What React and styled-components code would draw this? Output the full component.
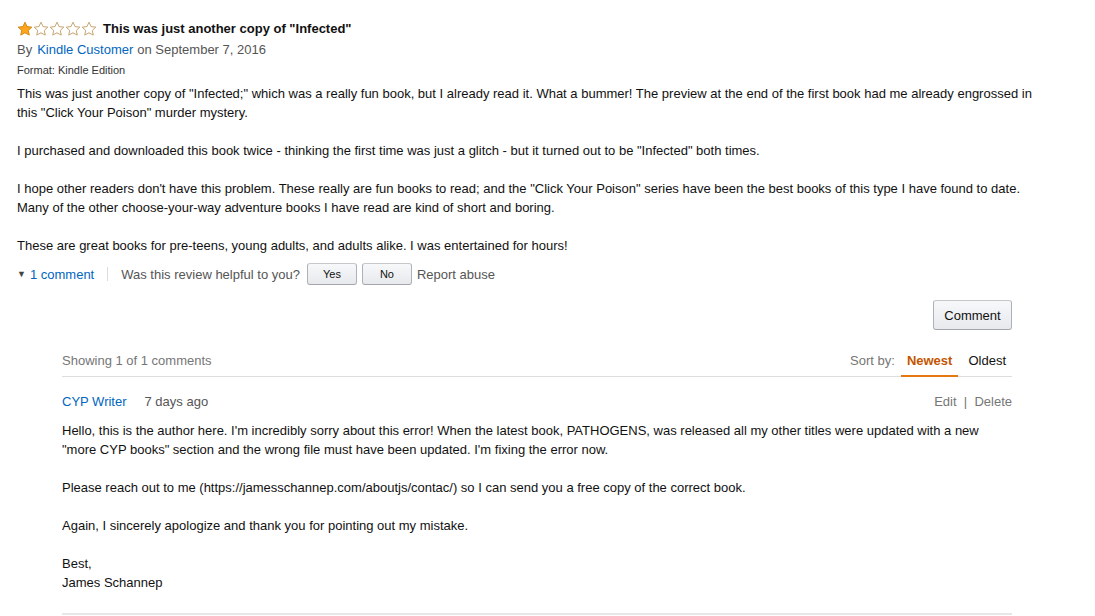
import React from 'react';
import styled, { createGlobalStyle } from 'styled-components';

const Global = createGlobalStyle`
body {
    margin: 0;
    background: #fff;
    font-family: "Liberation Sans", Arial, sans-serif;
    font-size: 13px;
    color: #111;
}
`

const Page = styled.div`
padding: 19px 17px 0 17px;
`

const Review = styled.div`
width: 1020px;
`

const TitleRow = styled.div`
display: flex;
align-items: center;
height: 19px;
gap: 6px;
`

const Stars = styled.div`
display: flex;
`

const Title = styled.span`
font-weight: bold;
line-height: 19px;
`

const ByLine = styled.div`
margin-top: 2px;
line-height: 19px;
color: #555;
`

const Link = styled.a`
color: #0066c0;
text-decoration: none;
margin: ${props => props.$gap || '0'};
`

const Format = styled.div`
margin-top: 3px;
font-size: 11px;
line-height: 16px;
color: #333;
`

const Body = styled.div`
margin-top: 6px;
line-height: 19px;
p {
    margin: 0 0 19px 0;
}
p:last-child {
    margin-bottom: 0;
}
`

const Actions = styled.div`
display: flex;
align-items: center;
margin-top: 8px;
height: 22px;
color: #555;
`

const Caret = styled.span`
font-size: 9px;
color: #444;
margin-right: 4px;
`

const Divider = styled.span`
width: 1px;
height: 14px;
background: #ddd;
margin: 0 13px;
`

const SmallButton = styled.button`
font-family: inherit;
font-size: 11px;
color: #111;
width: 50px;
height: 22px;
margin-left: ${props => props.$left || '5px'};
border: 1px solid #adb1b8;
border-top-color: #c5c7cb;
border-bottom-color: #a2a6ac;
border-radius: 3px;
background: linear-gradient(#f7f8fa, #e7e9ec);
padding: 0;
`

const Muted = styled.span`
margin-left: ${props => props.$left || '0'};
color: ${props => props.$color || '#555'};
`

const Comments = styled.div`
width: 950px;
margin: 15px 0 0 45px;
`

const CommentBar = styled.div`
display: flex;
justify-content: flex-end;
`

const BigButton = styled.button`
font-family: inherit;
font-size: 13px;
color: #111;
width: 79px;
height: 30px;
border: 1px solid #adb1b8;
border-top-color: #c5c7cb;
border-bottom-color: #a2a6ac;
border-radius: 3px;
background: linear-gradient(#f7f8fa, #e7e9ec);
`

const ListHeader = styled.div`
display: flex;
justify-content: space-between;
align-items: flex-end;
margin-top: 21px;
border-bottom: 1px solid #ddd;
`

const Showing = styled.span`
color: #767676;
line-height: 19px;
padding-bottom: 6px;
`

const Sort = styled.div`
display: flex;
align-items: flex-end;
`

const SortLabel = styled.span`
color: #767676;
line-height: 19px;
padding-bottom: 6px;
margin-right: 6px;
`

const Tab = styled.span`
line-height: 19px;
padding: 0 6px 5px 6px;
margin-bottom: -1px;
color: ${props => props.$active ? '#c45500' : '#111'};
font-weight: ${props => props.$active ? 'bold' : 'normal'};
border-bottom: 2px solid ${props => props.$active ? '#e47911' : 'transparent'};
&:last-child {
    padding-right: 6px;
    margin-left: 4px;
}
`

const Comment = styled.div`
padding: 15px 0 21px 0;
border-bottom: 2px solid #e7e7e7;
`

const CommentHead = styled.div`
display: flex;
justify-content: space-between;
line-height: 19px;
`

const Author = styled.div`
display: flex;
gap: 18px;
`

const Tools = styled.div`
color: #767676;
`

const CommentBody = styled.div`
margin-top: 10px;
line-height: 19px;
color: #111;
p {
    margin: 0 0 19px 0;
}
p:last-child {
    margin-bottom: 0;
}
`

const STAR = 'M8 1.2l2.05 4.4 4.75.55-3.5 3.25.95 4.7L8 11.75 3.75 14.1l.95-4.7-3.5-3.25 4.75-.55z';

const Star = ({ filled }) => (
    <svg width="16" height="16" viewBox="0 0 16 16">
        <path
            d={STAR}
            fill={filled ? '#ffa41c' : '#fff'}
            stroke={filled ? '#d28a13' : '#c8a46e'}
            strokeWidth="1"
            strokeLinejoin="round"
        />
    </svg>
);

const App = () => {
    return (
        <>
            <Global />
            <Page>
                <Review>
                    <TitleRow>
                        <Stars>
                            {[0, 1, 2, 3, 4].map(i => <Star key={i} filled={i === 0} />)}
                        </Stars>
                        <Title>This was just another copy of "Infected"</Title>
                    </TitleRow>
                    <ByLine>
                        By<Link href="#" $gap="0 4px 0 5px">Kindle Customer</Link>on September 7, 2016
                    </ByLine>
                    <Format>Format: Kindle Edition</Format>
                    <Body>
                        <p>This was just another copy of "Infected;" which was a really fun book, but I already read it. What a bummer! The preview at the end of the first book had me already engrossed in this "Click Your Poison" murder mystery.</p>
                        <p>I purchased and downloaded this book twice - thinking the first time was just a glitch - but it turned out to be "Infected" both times.</p>
                        <p>I hope other readers don't have this problem. These really are fun books to read; and the "Click Your Poison" series have been the best books of this type I have found to date. Many of the other choose-your-way adventure books I have read are kind of short and boring.</p>
                        <p>These are great books for pre-teens, young adults, and adults alike. I was entertained for hours!</p>
                    </Body>
                    <Actions>
                        <Caret>▼</Caret>
                        <Link href="#">1 comment</Link>
                        <Divider />
                        <Muted>Was this review helpful to you?</Muted>
                        <SmallButton $left="7px">Yes</SmallButton>
                        <SmallButton>No</SmallButton>
                        <Muted $left="5px">Report abuse</Muted>
                    </Actions>
                </Review>
                <Comments>
                    <CommentBar>
                        <BigButton>Comment</BigButton>
                    </CommentBar>
                    <ListHeader>
                        <Showing>Showing 1 of 1 comments</Showing>
                        <Sort>
                            <SortLabel>Sort by:</SortLabel>
                            <Tab $active>Newest</Tab>
                            <Tab>Oldest</Tab>
                        </Sort>
                    </ListHeader>
                    <Comment>
                        <CommentHead>
                            <Author>
                                <Link href="#">CYP Writer</Link>
                                <Muted>7 days ago</Muted>
                            </Author>
                            <Tools>Edit &nbsp;|&nbsp; Delete</Tools>
                        </CommentHead>
                        <CommentBody>
                            <p>Hello, this is the author here. I'm incredibly sorry about this error! When the latest book, PATHOGENS, was released all my other titles were updated with a new "more CYP books" section and the wrong file must have been updated. I'm fixing the error now.</p>
                            <p>Please reach out to me (https://jamesschannep.com/aboutjs/contac/) so I can send you a free copy of the correct book.</p>
                            <p>Again, I sincerely apologize and thank you for pointing out my mistake.</p>
                            <p>Best,<br />James Schannep</p>
                        </CommentBody>
                    </Comment>
                </Comments>
            </Page>
        </>
    );
};

export default App;
